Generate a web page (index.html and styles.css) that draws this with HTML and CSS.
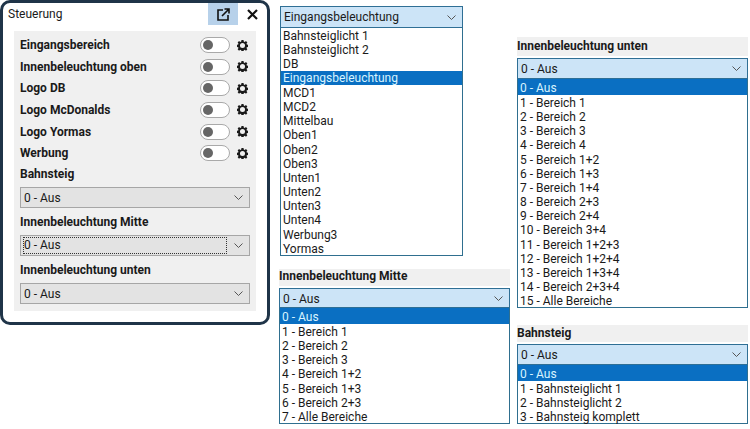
FILE: index.html
```html
<!DOCTYPE html>
<html lang="de">
<head>
<meta charset="utf-8">
<title>Steuerung</title>
<link rel="stylesheet" href="styles.css">
</head>
<body>
<svg class="defs" width="0" height="0" aria-hidden="true">
  <symbol id="gear" viewBox="0 0 24 24"><path fill="#1a1a1a" fill-rule="evenodd" d="M9.800 0h4.400l.6 3.300 2 .8L19.600 2.200l3 3-1.900 2.800.8 2 3.500.6v4.400l-3.500.6-.8 2 1.900 2.800-3 3-2.800-1.900-2 .8-.6 3.200H9.800l-.6-3.200-2-.8-2.800 1.900-3-3 1.900-2.800-.8-2-3.500-.6V10.600l3.500-.6.8-2L1.400 5.200l3-3 2.800 1.900 2-.8zM12 6.500a5.500 5.500 0 1 0 0 11 5.500 5.500 0 0 0 0-11z"/></symbol>
  <symbol id="chev" viewBox="0 0 9 5"><path fill="none" stroke="#555" stroke-width="1" d="M.5.500l4 4 4-4"/></symbol>
</svg>

<section class="panel">
  <header class="titlebar">
    <span class="title">Steuerung</span>
    <span class="popout">
      <svg width="13" height="13" viewBox="0 0 13 13"><path fill="none" stroke="#111" stroke-width="1.600" d="M6 2H1v10h10V7M5 8l7-7M7.500 1H12v4.500"/></svg>
    </span>
    <span class="close">
      <svg width="11" height="11" viewBox="0 0 11 11"><path stroke="#111" stroke-width="2.200" d="M1 1l9 9M10 1l-9 9"/></svg>
    </span>
  </header>
  <div class="panel-body">
    <div class="row"><b>Eingangsbereich</b><span class="toggle"></span><svg class="gear"><use href="#gear"/></svg></div>
    <div class="row"><b>Innenbeleuchtung oben</b><span class="toggle"></span><svg class="gear"><use href="#gear"/></svg></div>
    <div class="row"><b>Logo DB</b><span class="toggle"></span><svg class="gear"><use href="#gear"/></svg></div>
    <div class="row"><b>Logo McDonalds</b><span class="toggle"></span><svg class="gear"><use href="#gear"/></svg></div>
    <div class="row"><b>Logo Yormas</b><span class="toggle"></span><svg class="gear"><use href="#gear"/></svg></div>
    <div class="row"><b>Werbung</b><span class="toggle"></span><svg class="gear"><use href="#gear"/></svg></div>
    <div class="group">
      <b class="group-label">Bahnsteig</b>
      <div class="select"><span>0 - Aus</span><svg class="chev"><use href="#chev"/></svg></div>
    </div>
    <div class="group">
      <b class="group-label">Innenbeleuchtung Mitte</b>
      <div class="select focused"><span class="focus-ring">0 - Aus</span><svg class="chev"><use href="#chev"/></svg></div>
    </div>
    <div class="group">
      <b class="group-label">Innenbeleuchtung unten</b>
      <div class="select"><span>0 - Aus</span><svg class="chev"><use href="#chev"/></svg></div>
    </div>
  </div>
</section>

<section class="drop drop-eingang">
  <div class="select open"><span>Eingangsbeleuchtung</span><svg class="chev"><use href="#chev"/></svg></div>
  <ul class="list">
    <li>Bahnsteiglicht 1</li><li>Bahnsteiglicht 2</li><li>DB</li>
    <li class="sel">Eingangsbeleuchtung</li>
    <li>MCD1</li><li>MCD2</li><li>Mittelbau</li><li>Oben1</li><li>Oben2</li><li>Oben3</li>
    <li>Unten1</li><li>Unten2</li><li>Unten3</li><li>Unten4</li><li>Werbung3</li><li>Yormas</li>
  </ul>
</section>

<section class="drop drop-mitte">
  <div class="drop-label"><b>Innenbeleuchtung Mitte</b></div>
  <div class="select open"><span>0 - Aus</span><svg class="chev"><use href="#chev"/></svg></div>
  <ul class="list">
    <li class="sel">0 - Aus</li><li>1 - Bereich 1</li><li>2 - Bereich 2</li><li>3 - Bereich 3</li>
    <li>4 - Bereich 1+2</li><li>5 - Bereich 1+3</li><li>6 - Bereich 2+3</li><li>7 - Alle Bereiche</li>
  </ul>
</section>

<section class="drop drop-unten">
  <div class="drop-label"><b>Innenbeleuchtung unten</b></div>
  <div class="select open"><span>0 - Aus</span><svg class="chev"><use href="#chev"/></svg></div>
  <ul class="list">
    <li class="sel">0 - Aus</li><li>1 - Bereich 1</li><li>2 - Bereich 2</li><li>3 - Bereich 3</li><li>4 - Bereich 4</li>
    <li>5 - Bereich 1+2</li><li>6 - Bereich 1+3</li><li>7 - Bereich 1+4</li><li>8 - Bereich 2+3</li><li>9 - Bereich 2+4</li>
    <li>10 - Bereich 3+4</li><li>11 - Bereich 1+2+3</li><li>12 - Bereich 1+2+4</li><li>13 - Bereich 1+3+4</li>
    <li>14 - Bereich 2+3+4</li><li>15 - Alle Bereiche</li>
  </ul>
</section>

<section class="drop drop-bahn">
  <div class="drop-label"><b>Bahnsteig</b></div>
  <div class="select open"><span>0 - Aus</span><svg class="chev"><use href="#chev"/></svg></div>
  <ul class="list">
    <li class="sel">0 - Aus</li><li>1 - Bahnsteiglicht 1</li><li>2 - Bahnsteiglicht 2</li><li>3 - Bahnsteig komplett</li>
  </ul>
</section>
</body>
</html>
```
FILE: styles.css
```css
* { box-sizing: border-box; }
html, body { margin: 0; padding: 0; }
body {
  position: relative;
  width: 750px;
  height: 429px;
  overflow: hidden;
  background: #fff;
  color: #1a1a1a;
  font-family: Roboto, "Noto Sans", "Liberation Sans", sans-serif;
  font-size: 12px;
}
.defs { position: absolute; }
b { font-weight: 700; }

.panel {
  position: absolute;
  left: 0;
  top: 0;
  width: 270px;
  height: 325px;
  border: 3px solid #1f3448;
  border-radius: 10px;
  background: #fff;
  display: flex;
  flex-direction: column;
}
.titlebar { height: 25px; display: flex; align-items: flex-start; flex: none; padding-left: 5px; }
.title { flex: 1; line-height: 16px; padding-top: 3px; font-size: 12px; }
.popout { width: 30px; height: 22px; background: #b7d1ea; display: flex; align-items: center; justify-content: center; }
.close { width: 29px; height: 22px; display: flex; align-items: center; justify-content: center; }

.panel-body {
  margin: 3px 11px 0;
  height: 280px;
  background: #f0f0f0;
  padding: 3.400px 6px 0;
}
.row { height: 21.600px; display: flex; align-items: center; font-size: 12px; }
.row b { flex: 1; }
.toggle {
  position: relative;
  width: 30px;
  height: 16px;
  border: 1px solid #a9a9a9;
  border-radius: 8px;
  background: #fff;
}
.toggle::before {
  content: "";
  position: absolute;
  left: 2px;
  top: 2px;
  width: 10px;
  height: 10px;
  border-radius: 50%;
  background: #666;
}
.gear { width: 11px; height: 11px; margin: 0 2px 0 7px; }

.group { height: 48px; }
.group-label { display: block; height: 23px; line-height: 20px; font-size: 12px; }
.group .select { background: #e3e3e3; border: 1px solid #a6a6a6; height: 21px; }

.select {
  height: 21px;
  display: flex;
  align-items: center;
  justify-content: space-between;
  padding: 0 6px 0 3px;
  font-size: 12px;
}
.select > span { white-space: nowrap; padding-top: 1px; }
.select.open { background: #cce4f7; border: 1px solid #2f6f95; padding-left: 3px; }
.select > .focus-ring { flex: 1; height: 17px; line-height: 15px; margin-left: -1px; margin-right: 7px; border: 1px dotted #333; padding: 0; }
.chev { width: 9px; height: 5px; flex: none; }

.drop { position: absolute; font-size: 12px; }
.drop-eingang { left: 280px; top: 6px; width: 183px; }
.drop-eingang .select.open { height: 22px; }
.drop-eingang .select > span { padding-top: 0; }
.drop-mitte { left: 279px; top: 269px; width: 231px; }
.drop-mitte .select.open { height: 20px; }
.drop-unten { left: 517px; top: 37px; width: 231px; }
.drop-bahn { left: 517px; top: 325px; width: 231px; }
.drop-label { background: #f0f0f0; margin-bottom: 2px; line-height: 14px; height: 17px; }
.drop-bahn .drop-label { line-height: 16px; }
.drop-unten .drop-label { height: 19px; line-height: 18px; }

.list {
  list-style: none;
  margin: 0;
  padding: 0;
  background: #fff;
  border: 1px solid #2f6f8f;
  border-top: 0;
}
.list li { height: 14.170px; line-height: 14px; padding: 1px 0 0 2px; white-space: nowrap; }
.list li.sel { background: #0a6fc2; color: #d8f4ff; height: 16px; line-height: 14px; padding-top: 2px; }
.drop-eingang .list li { height: 14.200px; }
.drop-eingang .list li.sel { height: 14.200px; line-height: 13px; padding-top: 1px; }
```
